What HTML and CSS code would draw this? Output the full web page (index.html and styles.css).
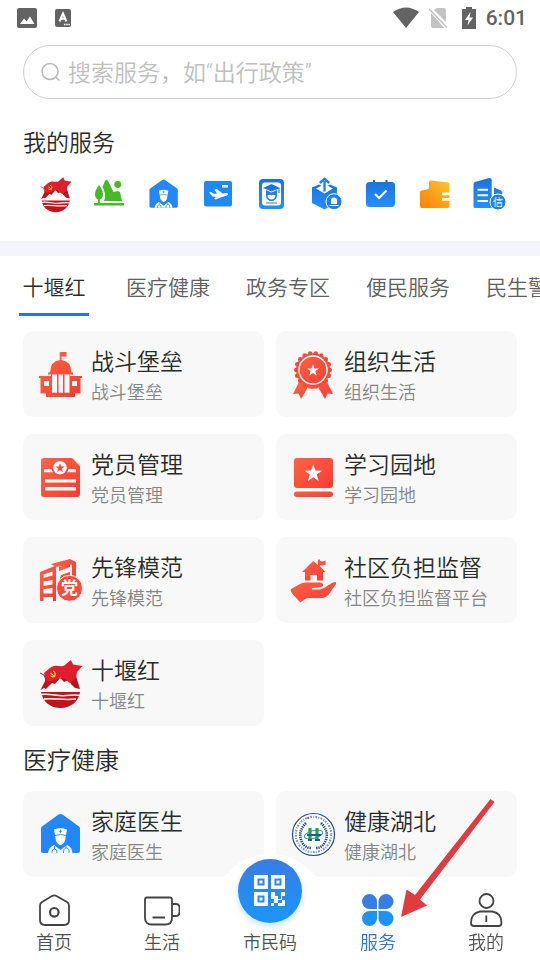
FILE: index.html
```
<!DOCTYPE html>
<html lang="zh-CN">
<head>
  <meta charset="UTF-8">
  <meta name="viewport" content="width=device-width, initial-scale=1.0">
  <title>服务</title>
  <link rel="stylesheet" href="styles.css">
</head>
<body>
  <!-- Shared gradients and icons used more than once -->
  <svg class="defs" width="0" height="0" aria-hidden="true">
    <defs>
      <linearGradient id="red" x1="0" y1="0" x2="1" y2="1">
        <stop offset="0" stop-color="#ff6546"/>
        <stop offset="1" stop-color="#f93a33"/>
      </linearGradient>
      <linearGradient id="blue" x1="0" y1="0" x2="0" y2="1">
        <stop offset="0" stop-color="#1b74dc"/>
        <stop offset="1" stop-color="#2490ff"/>
      </linearGradient>
      <linearGradient id="orange" x1="1" y1="0" x2="0" y2="1">
        <stop offset="0" stop-color="#fcc62f"/>
        <stop offset="1" stop-color="#ff7e05"/>
      </linearGradient>
      <polygon id="star" points="0,-10 2.4,-3.2 9.5,-3.1 3.8,1.2 5.9,8.1 0,4 -5.9,8.1 -3.8,1.2 -9.5,-3.1 -2.4,-3.2"/>
      <symbol id="shiyan" viewBox="0 0 44 44" overflow="visible">
        <path d="M7 18L1.500 29L5 27L8 29L13 23L17 25L22 18L27 24L31 22L36 27L41 28L37 15z" fill="#b81419"/>
        <path d="M5 30L13 22L16 23L21 17L25 21L30 19L33 26L39 31z" fill="#fff"/>
        <path d="M2 31H41C40 40 32 47 21.500 47C11 47 4 41 2 31z" fill="#c4121a"/>
        <path d="M1 33.500C12 32 18 35.500 27 34.500S38 33.500 41 34.500M5 38C14 36.500 23 39.500 37 38" fill="none" stroke="#fff" stroke-width="1.500"/>
        <path d="M2 29.500H16M24 29.500H41" stroke="#fff" stroke-width="1"/>
        <path d="M5 12C9 9 11 6 15 5C20 4 24 7 27 3L32 -1L34 3.500L43.500 5L38 11L37 17L31 22C26 19 25 16 20 17C15 20 11 21 7 20z" fill="#e01f2d"/>
        <path d="M1 12L5 14L8 22" fill="none" stroke="#9c2420" stroke-width="1"/>
        <path d="M14 10C17 11 17 15 14 16L11.500 15M11.500 12L16 16" fill="none" stroke="#ffd428" stroke-width="1.200"/>
      </symbol>
      <symbol id="doctor" viewBox="0 0 44 44">
        <path d="M19.500 2.600Q21.500 1.200 23.500 2.600L40 14.500Q41 15.300 41 16.500V39Q41 41 39 41H4Q2 41 2 39V16.500Q2 15.300 3 14.500z" fill="#2187fa"/>
        <path d="M15 17.500Q21.500 15 28 17.500L27 23L26 29Q24 33 21.500 33T17 29L16 23z" fill="#fff"/>
        <path d="M15 33L21.500 38L28 33Q33 35 33.500 41H9Q10 35 15 33z" fill="#fff"/>
        <path d="M16 23.500Q21.500 21.500 27 23.500M21.500 17.700V21M19.900 19.300H23.100" fill="none" stroke="#2187fa" stroke-width=".9"/>
        <path d="M15.500 34V37M13 41Q12.500 37 15.500 37T18 41M27 33.500V36M24.500 41Q24.500 36 27.500 36T30 41" fill="none" stroke="#2187fa" stroke-width="1"/>
      </symbol>
    </defs>
  </svg>

  <header class="status-bar">
    <div class="status-group">
      <svg width="20" height="20" viewBox="0 0 20 20"><rect x="0" y="0" width="20" height="20" rx="2" fill="#636363"/><path d="M3 16L7 10.500L9.500 13.500L13 8.500L17.500 16z" fill="#fff"/></svg>
      <svg width="17" height="18" viewBox="0 0 17 18"><rect width="16" height="18" rx="2" fill="#636363"/><path d="M4.500 12.500L8 4.500L11.500 12.500M6 9.800H10" fill="none" stroke="#fff" stroke-width="2"/><path d="M9 15.500H15" stroke="#fff" stroke-width="1.500" stroke-dasharray="1.500 .7"/></svg>
    </div>
    <div class="status-group">
      <svg width="26" height="22" viewBox="0 0 26 22"><path d="M0 5Q13 -4 26 5L13 21z" fill="#636363"/></svg>
      <svg width="20" height="22" viewBox="0 0 20 22"><path d="M8 1H15Q17 1 17 3V15L5 3zM2 6L15.500 21H4Q2 21 2 19z" fill="#c3c3c3"/><path d="M0 2L18 20.500" stroke="#c3c3c3" stroke-width="1.500"/></svg>
      <svg class="battery" width="14" height="22" viewBox="0 0 14 22"><path d="M4 0H10V2H14V22H0V2H4z" fill="#636363"/><path d="M8.500 5L3 13H6.500L5.500 18.500L11 10.500H7.500z" fill="#fff"/></svg>
      <span class="clock">6:01</span>
    </div>
  </header>

  <main>
    <form class="search">
      <label for="search-input" aria-label="搜索服务">
        <svg width="20" height="20" viewBox="0 0 20 20" fill="none" stroke="#bbb" stroke-width="1.600"><circle cx="9" cy="9.500" r="8"/><path d="M15 15.500L18.500 18.500"/></svg>
      </label>
      <input id="search-input" type="text" placeholder="搜索服务，如“出行政策”">
    </form>

    <section class="my-services">
      <h2>我的服务</h2>
      <div class="shortcuts">
        <a href="#" aria-label="十堰红"><svg class="icon-sm"><use href="#shiyan"/></svg></a>
        <a href="#" aria-label="旅游">
          <svg class="icon-sm" viewBox="0 0 32 32" fill="#43bb25"><path d="M5 7Q9 12 9 16.500Q9 20 5.800 21.500V25H30V27.500H0V25H4V21.500Q1 20 1 16.500Q1 12 5 7z"/><path d="M10 23Q11.500 20 11 16Q10.500 12 8.500 9L11 3Q12.500 .5 14 3L19.500 14L24 13L26 14L28 23z"/><circle cx="23.700" cy="6.500" r="3.400"/></svg>
        </a>
        <a href="#" aria-label="家庭医生"><svg class="icon-sm"><use href="#doctor"/></svg></a>
        <a href="#" aria-label="机票">
          <svg class="icon-sm" viewBox="0 0 32 32"><rect x="2" y="3" width="28" height="25.500" rx="2" fill="#1e8bf5"/><rect x="20" y="7" width="6" height="2.600" rx=".5" fill="#fff"/><path d="M7 14.500L9 14L12 16L15 15.500L12.500 11.500L15 11L20.500 15.500L25 15Q27 16 25 17.500L18.500 19.500L14 21.500L12 21L14 19L10.500 18.500z" fill="#fff"/></svg>
        </a>
        <a href="#" aria-label="教育">
          <svg class="icon-sm" viewBox="0 0 32 32"><rect x="3" y="1" width="25" height="30" rx="4" fill="url(#blue)"/><rect x="6" y="4.500" width="19" height="23" rx="3" fill="#fff"/><path d="M7 10L15.500 6L24 10L15.500 13.500z" fill="#1b74dc"/><path d="M10 12V17C10 25 21 25 21 17V12L15.500 14.500z" fill="#2180ea"/><path d="M11.500 17.500Q13.500 16 15.500 17.500Q17.500 16 19.500 17.500Q19 21.500 15.500 21.500T11.500 17.500z" fill="#fff"/><path d="M23 10V15M10 25H21" stroke="#2180ea" stroke-width="1.200"/></svg>
        </a>
        <a href="#" aria-label="上报">
          <svg class="icon-sm" viewBox="0 0 32 32"><path d="M1 9.500L8 6.500L13.500 9.500L19 6.500L26 9.500V24L13.500 31.500L1 25z" fill="url(#blue)"/><path d="M5 10.500L10 8L17 8L22 10.500L13.500 15.500z" fill="#fff"/><path d="M13.500 13.500V3M8.800 5L13.500 .8L18.200 5" fill="none" stroke="#2180ea" stroke-width="2.400"/><circle cx="23" cy="23.700" r="8" fill="#2180ea" stroke="#fff"/><path d="M20 26V22.500Q20 19.500 23 19.500T26 22.500V26z" fill="#fff"/><path d="M18.500 27.500H27.500" stroke="#fff"/></svg>
        </a>
        <a href="#" aria-label="预约">
          <svg class="icon-sm" viewBox="0 0 32 32"><path d="M9 2V6M21.500 2V6" stroke="#1a63bd" stroke-width="2"/><rect x="1" y="4" width="29" height="25" rx="3.500" fill="url(#blue)"/><path d="M10 16L14 20L21.500 12.500" fill="none" stroke="#fff" stroke-width="2"/></svg>
        </a>
        <a href="#" aria-label="钱包">
          <svg class="icon-sm" viewBox="0 0 32 32"><path d="M1 14Q1 12.500 2.500 12.500L8 11.500Q10 11 10 9V4Q10 2.300 12 2.500L29 4.500Q30.500 5 30.500 6V14.500H23V17.300H30.500V20H23V22.700H30.500V28Q30.500 30 28.500 30H3Q1 30 1 28z" fill="url(#orange)"/></svg>
        </a>
        <a href="#" aria-label="信用">
          <svg class="icon-sm" viewBox="0 0 32 32"><path d="M.5 6Q.5 4.500 2 4L16 0Q18.700 -.5 18.700 2V30H2Q.5 30 .5 28.500zM21 9.500L28 12.500Q29.500 13.500 29.500 16H21z" fill="url(#blue)"/><path d="M4.500 11.700H15M4.500 17.300H15M4.500 23H15" stroke="#fff" stroke-width="2"/><circle cx="25" cy="24" r="8" fill="#2180ea" stroke="#fff"/><text x="25" y="27.500" class="seal-sm">信</text></svg>
        </a>
      </div>
    </section>

    <nav class="tabs">
      <button class="tab active">十堰红</button>
      <button class="tab">医疗健康</button>
      <button class="tab">政务专区</button>
      <button class="tab">便民服务</button>
      <button class="tab">民生警务</button>
    </nav>

    <section class="cards">
      <a class="card" href="#">
        <svg class="icon" viewBox="0 0 44 44" fill="url(#red)"><path d="M20.800 0H27.500V4.500H22.500V8Q32 9 32.500 20.500H34V22.500H31V24H43V26H41.500V41.500H36V45H7V41.500H1.500V26H0V24H12V22.500H9V20.500H11Q11.500 9 20.800 8z"/><path d="M13 22.500H18V40.700H13zM19.500 22.500H24V40.700H19.500zM25.500 22.500H30.500V40.700H25.500zM5 29H10V34H5zM33 29H38V34H33z" fill="#f8f8f8"/></svg>
        <div class="card-text"><h3>战斗堡垒</h3><p>战斗堡垒</p></div>
      </a>
      <a class="card" href="#">
        <svg class="icon" viewBox="0 0 44 44" fill="url(#red)"><path d="M7 30L1 42L6.500 41.500L9 47L16 35L21 37L26 35L33 47L35.500 41.500L41 42L35 30z"/><circle cx="21" cy="18" r="17"/><circle cx="21" cy="18" r="16.800" fill="none" stroke="#fb4a3b" stroke-width="4.500" stroke-linecap="round" pathLength="18" stroke-dasharray="0 1"/><circle cx="21" cy="18" r="14" fill="none" stroke="#fff" stroke-width="1.400"/><use href="#star" transform="translate(21 18.500) scale(.62)" fill="#fff"/></svg>
        <div class="card-text"><h3>组织生活</h3><p>组织生活</p></div>
      </a>
      <a class="card" href="#">
        <svg class="icon" viewBox="0 0 44 44" fill="url(#red)"><path d="M5 3H33L41 11V39Q41 42 38 42H5Q2 42 2 39V6Q2 3 5 3z"/><path d="M5 14.300H37V17.300H5zM6 24.500H37V27.500H6zM6 32H37V35.500H6z" fill="#fff"/><circle cx="21" cy="12.700" r="8.500"/><circle cx="21" cy="12.700" r="6.800" fill="#fff"/><use href="#star" transform="translate(21 13) scale(.5)" fill="#f94a3b"/></svg>
        <div class="card-text"><h3>党员管理</h3><p>党员管理</p></div>
      </a>
      <a class="card" href="#">
        <svg class="icon" viewBox="0 0 44 44" fill="url(#red)"><rect x="2" y="3" width="39" height="30" rx="3"/><rect x="2" y="36.500" width="39" height="5.500" rx="2.700"/><use href="#star" transform="translate(21.300 18.500) scale(.92)" fill="#fff"/></svg>
        <div class="card-text"><h3>学习园地</h3><p>学习园地</p></div>
      </a>
      <a class="card" href="#">
        <svg class="icon" viewBox="0 0 44 44" fill="url(#red)"><path d="M1 14L17 7.500V43H14V39H4.500V43H1zM4.500 16.500V20L13.500 17.500V13.500zM4.500 23.500V28L13.500 26.500V22zM4.500 31V35.500H13.500V30z" fill-rule="evenodd"/><path d="M12 6L31 1L37 4V23H33V6.500L17 9z"/><path d="M20 9L31 6V9L20 13zM22 17L31 14V17L20 24z"/><circle cx="30.500" cy="30.300" r="13" fill="#fb4a3b" stroke="#f8f8f8"/><text x="30.500" y="36" class="seal">党</text></svg>
        <div class="card-text"><h3>先锋模范</h3><p>先锋模范</p></div>
      </a>
      <a class="card" href="#">
        <svg class="icon" viewBox="0 0 44 44" fill="url(#red)"><path d="M21.300 3L26 7V1.500H28V3Q31 4 33.500 2.500V6.500Q31 8 28 7V8.500L33.500 14H31V22.500H25V17H18.500V22.500H13V14H10z"/><path d="M-1 31L8 26Q10 24.500 14 24.500H28Q32 25 31 28Q30 29.500 20 30V31.500H28Q32 31 35 28L41 24.500Q45 23 44 26L37 36Q34 40 29 40H17Q13 40 8.500 44.500L0 35.500Q-2 33 -1 31z"/></svg>
        <div class="card-text"><h3>社区负担监督</h3><p>社区负担监督平台</p></div>
      </a>
      <a class="card" href="#">
        <svg class="icon"><use href="#shiyan"/></svg>
        <div class="card-text"><h3>十堰红</h3><p>十堰红</p></div>
      </a>
    </section>

    <h2 class="group-title">医疗健康</h2>
    <section class="cards">
      <a class="card" href="#">
        <svg class="icon"><use href="#doctor"/></svg>
        <div class="card-text"><h3>家庭医生</h3><p>家庭医生</p></div>
      </a>
      <a class="card" href="#">
        <svg class="icon" viewBox="0 0 44 44"><circle cx="21.500" cy="22.500" r="21" fill="#fff" stroke="#1f4a86" stroke-width="1.200"/><g fill="none"><circle cx="21.500" cy="22.500" r="17.700" stroke="#7f97b8" stroke-width="2.200" stroke-dasharray="1.800 1.300 1 1.200"/><path d="M14 11Q5 20 10 30Q13 36 19 36M29 11Q38 20 33 30Q30 36 24 36" stroke="#1f4a86" stroke-width="2.600" stroke-dasharray="1.300 .9"/><ellipse cx="21.500" cy="22.500" rx="9.500" ry="3.800" transform="rotate(-15 21.500 22.500)" stroke="#2b8fc0"/><path d="M18 16V29M25 16V29" stroke="#29a043" stroke-width="3.200"/><path d="M15 23H29M16 28H20M23 28H28" stroke="#1e5c9a" stroke-width="2"/></g><circle cx="16" cy="6" r="1" fill="#d84444"/></svg>
        <div class="card-text"><h3>健康湖北</h3><p>健康湖北</p></div>
      </a>
    </section>
  </main>

  <nav class="bottom-nav">
    <a class="nav-item" href="#">
      <svg class="nav-icon" viewBox="0 0 36 36"><path d="M16 4Q18.300 2.600 20.500 4L31 10Q33 11.200 33 13.500V28Q33 33 28 33H9Q4 33 4 28V13.500Q4 11.200 6 10z"/><circle cx="18.300" cy="20.300" r="4.300" stroke-width="2.200"/></svg>
      <span>首页</span>
    </a>
    <a class="nav-item" href="#">
      <svg class="nav-icon" viewBox="0 0 36 36"><path d="M3 5.500H26Q28 5.500 28 7.500V26Q28 32.500 21.500 32.500H8Q1 32.500 1 26V7.500Q1 5.500 3 5.500zM28 12H32Q35.500 12 35.500 15.500V20Q35.500 24 31.500 24H28M8.500 25.500H21"/></svg>
      <span>生活</span>
    </a>
    <a class="nav-item nav-code" href="#">
      <svg class="hump" viewBox="0 0 108 26" width="108" height="26"><path d="M0 26Q8 25 14 18C34 -5 74 -5 94 18Q100 25 108 26z" fill="#fff"/></svg>
      <span class="code-circle">
        <svg width="64" height="64" viewBox="0 0 64 64" fill="#fff"><path fill-rule="evenodd" d="M16 16H30V30H16zM19.500 19.500V26.500H26.500V19.500zM33 16H47V30H33zM36.500 19.500V26.500H43.500V19.500zM16 33H30V47H16zM19.500 36.500V43.500H26.500V36.500z"/><path d="M21.500 21.500H24.500V24.500H21.500zM38.500 21.500H41.500V24.500H38.500zM21.500 38.500H24.500V41.500H21.500zM33 33H37V37H40V40H43V33H47V37H44V41H40V44H36V40H33zM33 44H36V47H33zM40 44H44V41H47V47H40z"/></svg>
      </span>
      <span>市民码</span>
    </a>
    <a class="nav-item active" href="#">
      <svg class="nav-icon" viewBox="0 0 36 36"><path d="M9.500 2A7.500 7.500 0 0 1 17 9.500V17H9.500A7.500 7.500 0 0 1 9.500 2zM26 2A7.500 7.500 0 0 0 18.500 9.500V17H26A7.500 7.500 0 0 0 26 2z" fill="#367ee5"/><path d="M9.500 34A7.500 7.500 0 0 0 17 26.500V19H9.500A7.500 7.500 0 0 0 9.500 34zM26 34A7.500 7.500 0 0 1 18.500 26.500V19H26A7.500 7.500 0 0 1 26 34z" fill="#1d93f8"/></svg>
      <span>服务</span>
      <svg class="arrow" width="96" height="120" viewBox="0 0 96 120"><path d="M89.500 1L93.500 4L19 101.500L26 107.500L0 119L5.500 91.500L14 97z" fill="#e03c40"/></svg>
    </a>
    <a class="nav-item" href="#">
      <svg class="nav-icon" viewBox="0 0 36 36"><circle cx="18.500" cy="9" r="7"/><path d="M12 19.500H24.500Q33.500 21 33.500 31Q33.500 34 30.500 34H6Q3 34 3 31Q3 21 12 19.500zM18.300 23.500V30"/></svg>
      <span>我的</span>
    </a>
  </nav>
</body>
</html>
```
FILE: styles.css
```
:root {
  --primary: #2f73dc;
  --text: #2b2b2b;
  --muted: #858585;
  --card: #f8f8f8;
  --band: #f3f5fa;
}
* { box-sizing: border-box; }
body {
  margin: 0;
  padding-bottom: 83px;
  font-family: "Noto Sans CJK SC", sans-serif;
  font-weight: 350;
  background: #fff;
  color: var(--text);
}
h2, h3, p { margin: 0; font-weight: inherit; }
a { color: inherit; text-decoration: none; }
svg { display: block; flex-shrink: 0; }
.defs { position: absolute; }

/* Status bar */
.status-bar {
  height: 36px;
  padding: 0 13px 0 17px;
  display: flex;
  align-items: center;
  justify-content: space-between;
}
.status-group {
  display: flex;
  align-items: center;
  gap: 10px;
}
.status-group:first-child { gap: 18px; }
.battery { margin-left: 3px; }
.clock {
  font-family: Roboto, sans-serif;
  font-size: 21px;
  font-weight: 500;
  line-height: 36px;
  color: #636363;
}

/* Search */
.search {
  height: 54px;
  margin: 9px 23px 0;
  padding: 0 17px;
  display: flex;
  align-items: center;
  gap: 7px;
  border: 1px solid #d0d0d0;
  border-radius: 27px;
}
.search input {
  flex: 1;
  min-width: 0;
  padding: 2px 0 0;
  border: none;
  outline: none;
  background: none;
  font-family: Roboto, "Noto Sans CJK SC", sans-serif;
  font-size: 23px;
  font-weight: inherit;
  color: var(--text);
}
.search input::placeholder { color: #c0c0c0; opacity: 1; }

/* My services */
.my-services {
  padding: 22px 23px 29px;
  border-bottom: 15px solid var(--band);
}
.my-services h2 {
  font-size: 23px;
  line-height: 40px;
}
.shortcuts {
  display: grid;
  grid-template-columns: repeat(9, 1fr);
  margin: 16px 1px 0 6px;
}
.shortcuts a {
  display: flex;
  justify-content: center;
}
.icon-sm {
  width: 32px;
  height: 32px;
  margin: 1px 0 2px;
  overflow: visible;
}

/* Tabs */
.tabs {
  display: flex;
  overflow: hidden;
}
.tab {
  flex-shrink: 0;
  min-width: 108px;
  height: 60px;
  padding: 0 18px;
  border: none;
  background: none;
  font-family: inherit;
  font-size: 21px;
  font-weight: inherit;
  color: #606060;
  position: relative;
  cursor: pointer;
}
.tab.active { color: var(--text); }
.tab.active::after {
  content: "";
  position: absolute;
  left: 19px;
  right: 19px;
  bottom: 0;
  height: 3px;
  background: var(--primary);
}

/* Cards */
.cards {
  display: grid;
  grid-template-columns: 1fr 1fr;
  gap: 17px 12px;
  padding: 0 23px;
}
.tabs + .cards { margin-top: 15px; }
.card {
  height: 86px;
  padding: 0 16px;
  display: flex;
  align-items: center;
  gap: 8px;
  border-radius: 10px;
  background: var(--card);
}
.icon {
  width: 44px;
  height: 44px;
  overflow: visible;
}
.card-text { white-space: nowrap; }
.card h3 {
  font-size: 23px;
  line-height: 34px;
}
.card p {
  font-size: 18px;
  line-height: 28px;
  color: var(--muted);
}
.group-title {
  padding: 13px 23px 12px;
  font-size: 24px;
  line-height: 40px;
}
.seal, .seal-sm {
  font-size: 17px;
  font-weight: bold;
  text-anchor: middle;
  fill: #fff;
}
.seal-sm { font-size: 10px; font-weight: normal; }

/* Bottom navigation */
.bottom-nav {
  position: fixed;
  left: 0;
  right: 0;
  bottom: 0;
  display: grid;
  grid-template-columns: repeat(5, 1fr);
  padding: 15px 0 7px;
  background: #fff;
}
.nav-item {
  position: relative;
  display: flex;
  flex-direction: column;
  align-items: center;
  justify-content: flex-end;
  gap: 1px;
  font-size: 18px;
  line-height: 24px;
  color: #505050;
}
.nav-item.active { color: var(--primary); }
.nav-icon {
  width: 36px;
  height: 36px;
  fill: none;
  stroke: #444;
  stroke-width: 1.8;
}
.active .nav-icon { stroke: none; }
.hump {
  position: absolute;
  top: -39px;
  left: 50%;
  transform: translateX(-50%);
}
.code-circle {
  position: absolute;
  top: -33px;
  left: 50%;
  transform: translateX(-50%);
  border-radius: 50%;
  background: linear-gradient(#367ee5, #1b96f8);
  box-shadow: 0 3px 6px rgba(27,150,248,0.25);
}
.arrow {
  position: absolute;
  left: 77px;
  bottom: 35px;
  pointer-events: none;
}
```
